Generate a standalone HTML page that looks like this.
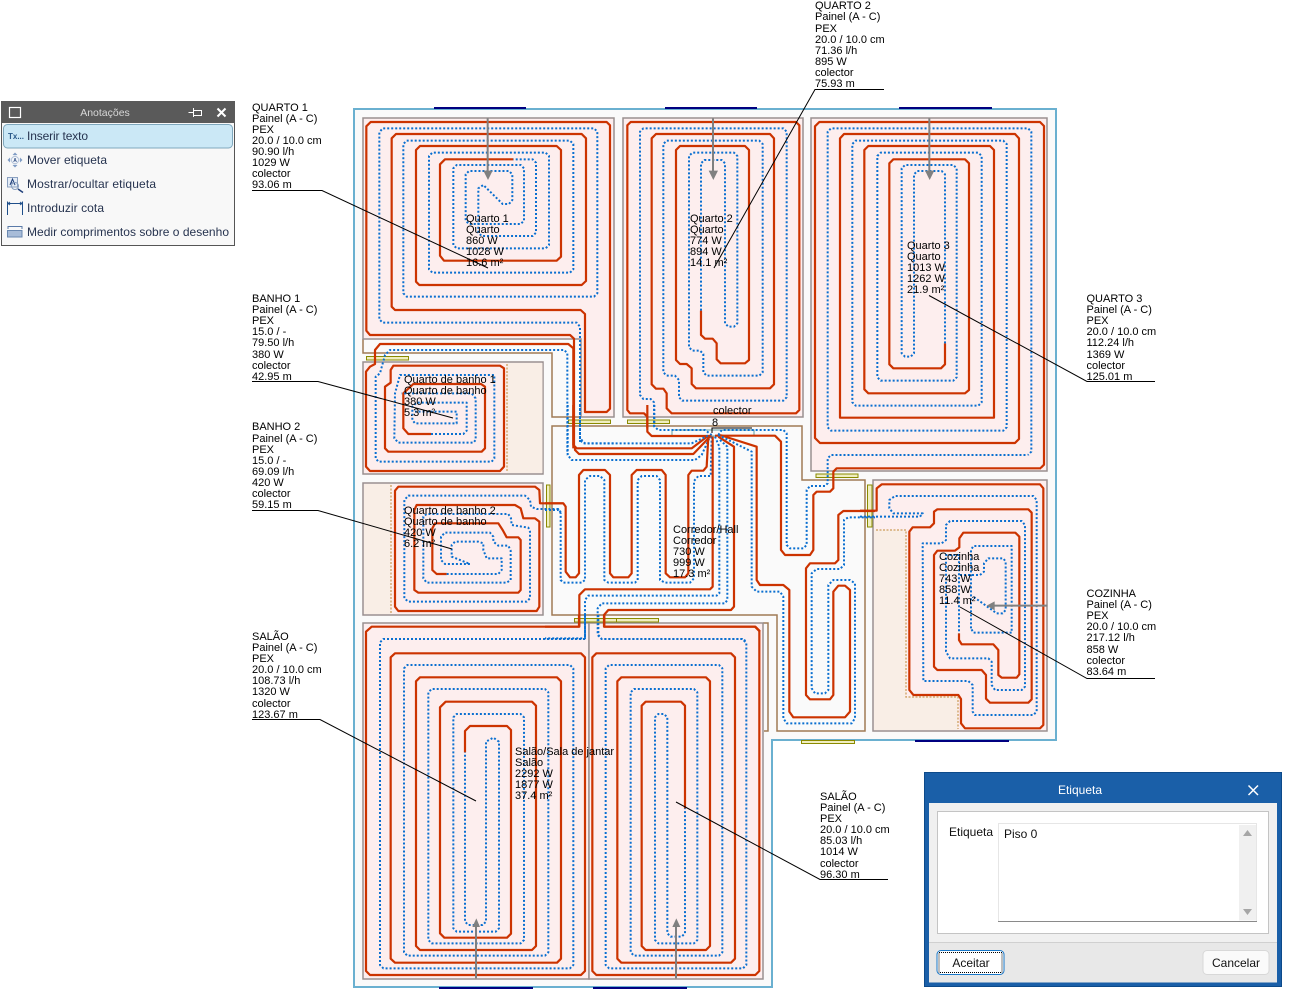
<!DOCTYPE html>
<html lang="pt">
<head>
<meta charset="utf-8">
<title>Anotações</title>
<style>
html,body{margin:0;padding:0;background:#fff;width:1300px;height:1007px;overflow:hidden}
svg{display:block}
text{font-family:"Liberation Sans",sans-serif;font-size:11px;fill:#000}
.r,.b,.g{fill:none;vector-effect:non-scaling-stroke;stroke-linejoin:round}
.r{stroke:#cc3300;stroke-width:2.2}
.b{stroke:#0a6fd0;stroke-width:2;stroke-dasharray:2 2}
.g{stroke:#808080;stroke-width:2}
.room{fill:#fdeeee;stroke:#999090;stroke-width:1.5}
.wall{fill:none;stroke:#a07a55;stroke-width:1.5}
.door{fill:#f0eec0;stroke:#8a8a00;stroke-width:1}
.lead{fill:none;stroke:#000;stroke-width:1}
.tan{fill:none;stroke:#d4aa70;stroke-width:1.5;stroke-dasharray:2 1.5}
.p{font-size:12px;fill:#26334f}
.d{font-size:12px;fill:#111}
</style>
</head>
<body>
<svg width="1300" height="1007" viewBox="0 0 1300 1007" xmlns="http://www.w3.org/2000/svg">
<!-- outer outline -->
<path d="M354 109H1056V740H772V987H354Z" fill="#fafafa" stroke="#6ab0d0" stroke-width="2"/>
<g stroke="#000080" stroke-width="2">
<path d="M434 108H526M665 108H757M899 108H992M439 988H533M593 988H687M915 741H1009"/>
</g>
<!-- walls -->
<path class="wall" d="M363 339V353H552V417H581"/>
<path class="wall" d="M552 426H802V480H865V731H777V615H552Z"/>
<path class="wall" d="M763 623H768V731H764"/>
<!-- rooms -->
<path class="room" d="M363 118H614V417H581V339H363Z"/>
<rect class="room" x="623" y="118" width="180" height="299"/>
<rect class="room" x="811" y="118" width="236" height="353"/>
<rect class="room" x="363" y="362" width="180" height="112"/>
<rect x="507" y="363" width="35.500" height="110" fill="#f9eee6"/>
<path class="tan" d="M507 364V472"/>
<rect class="room" x="363" y="483" width="180" height="132"/>
<rect x="364" y="484" width="27" height="130" fill="#f9eee6"/>
<path class="tan" d="M391 485V613"/>
<rect class="room" x="873" y="480" width="174" height="251"/>
<path d="M874 530H906V697H958V730H874Z" fill="#f9eee6"/>
<path class="tan" d="M876 530H906V697H958V729"/>
<rect class="room" x="363" y="623" width="226" height="356"/>
<rect class="room" x="589" y="623" width="174" height="356"/>
<!-- doors -->
<g class="door">
<rect class="door" x="366.500" y="356.500" width="42" height="3.500"/>
<rect class="door" x="568.500" y="420" width="42" height="3.500"/>
<rect class="door" x="627.500" y="420" width="42" height="3.500"/>
<rect class="door" x="816" y="474" width="42" height="3.500"/>
<rect class="door" x="546.500" y="485" width="3.500" height="42"/>
<rect class="door" x="867.500" y="485" width="4.500" height="42"/>
<rect class="door" x="574.500" y="618.500" width="42" height="3.500"/>
<rect class="door" x="616.500" y="618.500" width="42" height="3.500"/>
<rect class="door" x="801.500" y="740.500" width="53" height="3"/>
</g>
<!-- collector -->
<rect x="672" y="430" width="82" height="6" fill="none" stroke="#5f9ea0" stroke-width="1"/>
<path d="M712 433V428H752" fill="none" stroke="#000" stroke-width="1"/>

<!-- Quarto 1 -->
<g transform="translate(350,100) scale(.33333)">
<path class="r" d="M490 178H285L270 193V467L282 482H620L633 470V150L620 138H210L198 150V545L208 555H695L708 543V115L695 102H138L125 115V620L135 630H692L705 642V936H770L780 926V76L770 66H62L49 79V692L60 705H660L672 716V1044"/>
<path class="b" d="M690 1026V680L680 668H98L88 658V97L98 85H732L742 95V580L732 590H170L160 580V132L170 122H660L670 132V508L660 518H247L237 508V168L247 158H587L597 168V435L587 445H320L310 435V205L320 195H512L522 205V362L512 372H357L347 362V223L357 213H477L487 223V300L477 312H458L400 255L385 265V398L395 408H548L558 398V188L548 178H490"/>
<path class="g" d="M413 55V215"/><path d="M400 212H428L414 240Z" fill="#808080"/>
</g>

<!-- Quarto 2 & 3 -->
<g transform="translate(610,100) scale(.33333)">
<path class="r" d="M112 985V950L102 940H60L52 930V76L62 66H558L568 76V930L558 940H185L170 925V880L160 866H138L125 853V115L138 102H480L492 115V853L480 865H258L245 852V805L230 792H210L198 780V150L210 138H405L417 150V780L405 790H332L320 778V730L308 716H285L273 705V632"/>
<path class="b" d="M273 632V190L283 180H335L345 190V670L355 680H372L382 670V168L372 158H247L237 168V742L247 752H270L280 762V817L290 827H448L458 817V132L448 122H170L160 132V817L170 827H195L207 840V892L217 902H520L530 892V95L520 85H100L90 95V885L100 897H122L132 907V985"/>
<path class="r" d="M1005 730V793L993 805H850L838 793V190L850 178H1065L1077 190V870L1065 880H775L763 868V150L775 138H1140L1152 150V953H690V115L702 102H1215L1227 115V1017L1215 1029H630L615 1014V79L628 66H1290L1302 78V1094L1292 1104"/>
<path class="b" d="M1005 730V223L995 213H922L912 223V760L902 770H885L875 760V205L885 195H1030L1040 205V832L1030 842H812L802 832V168L812 158H1105L1115 168V907L1105 917H737L727 907V132L737 122H1180L1190 132V982L1180 992H663L653 982V95L663 85H1254L1264 95V1055L1254 1065"/>
<path class="g" d="M309 55V215"/><path d="M296 212H324L310 240Z" fill="#808080"/>
<path class="g" d="M958 55V215"/><path d="M945 212H973L959 240Z" fill="#808080"/>
</g>

<!-- Corridor -->
<g transform="translate(545,405) scale(.33333)">
<path class="r" d="M85 0V120L95 130H440L490 92"/>
<path class="r" d="M90 125V135L102 147H445L495 95"/>
<path class="r" d="M307 0V80L320 93H500"/>
<path class="b" d="M105 0V105L115 115H440L490 92"/>
<path class="b" d="M68 0V150L80 165H450L470 150L495 95"/>
<path class="b" d="M328 0V65L340 75H480L500 90"/>
<!-- loop to Quarto 3 -->
<path class="r" d="M510 92H690L708 110V435L720 450H795L805 435V270L815 260H855L865 250V200L875 190H1488"/>
<path class="b" d="M520 90L530 75H715L725 85V420L735 430H775L785 420V255L795 243H840L848 235V160L858 150H1448"/>
<!-- serpent -->
<path class="r" d="M0 295H55L62 305V500L75 517H92L102 505V210L115 195H180L195 210V505L205 517H250L260 505V210L275 195H350L362 210V505L375 517H420L430 505V210L440 197H475L485 185L490 95"/>
<path class="b" d="M0 315H40L47 325V525L55 533H110L120 525V225L135 213H165L178 225V525L190 533H270L278 525V225L290 213H335L345 225V525L360 533H435L447 520V228L460 213H497L500 95"/>
<!-- to Salão -->
<path class="r" d="M503 95V545L495 553H120L103 570V665H0"/>
<path class="r" d="M520 95L567 125V605L558 615H190L177 630V665H630L645 680"/>
<path class="b" d="M510 95L523 125V565L515 572H130L120 585V700H0"/>
<path class="b" d="M525 105L547 125V585L540 595H170L158 610V690L170 702H595L605 712"/>
<!-- to Cozinha -->
<path class="r" d="M525 90L635 125V525L645 540H715L733 555V920L745 937H900L915 920V555L900 542H880L865 560V870L855 883H795L783 870V490L795 475H870L880 465V330L895 318H990"/>
<path class="b" d="M520 90L620 140V545L635 560H705L715 575V940L725 955H920L930 940V535L915 525H865L850 540V855L840 865H810L800 850V505L815 492H885L897 480V345L910 337H990"/>
</g>

<!-- Quarto de banho 1 -->
<g transform="translate(355,340) scale(.33333)">
<path class="r" d="M655 325V25L640 12H75L60 30V72L45 80L33 95V380L45 393H435L447 380V85L435 77H115L107 90V128L90 140V325L100 335H380L390 325V140L378 132H175L145 160V265L160 282H228"/>
<path class="b" d="M228 282H325L335 272V188H185L172 200V240L180 250H305V215H180"/>
<path class="b" d="M637 335V40L628 30H105L90 45L75 100L62 110V355L70 365H410L418 355V105H135L120 160L118 295L130 308H355L362 300V175L350 160H140"/>
<path class="b" d="M675 0V295L690 310H780"/>
</g>

<!-- Quarto de banho 2 -->
<g transform="translate(355,340) scale(.33333)">
<path class="r" d="M625 490H555L553 450L540 440H130L120 452V800L130 813H545L553 800V545L540 535H505L497 505L480 495H185L178 510V750L190 758H490L497 750V600L490 592H455L443 570L430 550H240L232 565V690L245 702H275"/>
<path class="b" d="M275 702H430L440 690V655H395L385 630V610L370 605H300L290 615V650L345 672H270L258 660V590L270 578H405L415 590V605L430 617H460L467 632V720L455 728H215L205 715V530L215 522H460L468 535L470 555L520 563L525 575V775L515 785H160L148 775V480L160 467H510L525 480L528 500L545 507H610L618 518"/>
</g>

<!-- Cozinha -->
<g transform="translate(860,460) scale(.33333)">
<path class="r" d="M0 152H50V85L65 73H540L550 85V795L540 805H315L303 790V717L295 705H160L148 690V215L158 202H210L222 190V155L232 148H505L515 158V718L505 728H390L378 716V645L365 630H232L222 620V285L232 272H285L298 262V235L310 218H466L478 230V643L470 653H425L415 645V570L400 553H305L297 540V520"/>
<path class="b" d="M0 170H180L188 160H100L88 145V120L105 108H520L530 120V755L520 765H345L338 755V675L325 663H190L188 250H245L258 240V195L270 183H485L495 195V680L485 690H405L395 675V605L385 595H270L258 575V285H297V520"/>
<path class="b" d="M333 505V270L340 258H455V518H340L333 505"/>
<path class="b" d="M300 345H360L372 335V310L385 295H430L437 305V450L428 460H410L340 410"/>
<path class="g" d="M562 437H402"/><path d="M380 437L404 424V451Z" fill="#808080"/>
</g>

<!-- Salão -->
<g transform="translate(355,615) scale(.33333)">
<path class="r" d="M672 0V35H50L33 50V1068L45 1080H678L690 1068V127L678 115H120L107 127V1031L120 1043H606L618 1031V199L606 187H195L183 199V993L195 1005H531L543 993V272L531 260H272L255 277V955L268 968H456L468 956V345L456 333H345L330 348V412"/>
<path class="b" d="M690 0V72H85L75 82V1050L85 1060H645L655 1050V160L645 150H157L147 160V1012L157 1022H570L580 1012V232L570 222H230L220 232V975L230 985H497L507 975V307L497 297H305L295 307V940L305 950H422L432 940V380L415 368L393 380V920L383 930H340L330 920V412"/>
<path class="r" d="M748 0V35H1201L1213 47V1068L1201 1080H724L712 1068V127L724 115H1128L1140 127V1031L1128 1043H799L787 1031V199L799 187H1053L1065 199V993L1053 1005H872L860 993V272L872 260H978L990 272V580"/>
<path class="b" d="M730 0V60L740 72H1162L1174 84V1050L1164 1060H762L752 1050V160L762 150H1092L1102 160V1012L1092 1022H837L827 1012V232L837 222H1017L1027 232V975L1017 985H910L900 975V307L910 297H927L937 307V955L947 965H980L990 955V580"/>
<path class="g" d="M363 1090V935"/><path d="M352 936H375L364 910Z" fill="#808080"/>
<path class="g" d="M963 1090V935"/><path d="M952 936H976L964 910Z" fill="#808080"/>
</g>

<!-- room labels -->
<text x="466" y="222">Quarto 1<tspan x="466" dy="11">Quarto</tspan><tspan x="466" dy="11">860 W</tspan><tspan x="466" dy="11">1028 W</tspan><tspan x="466" dy="11">16.6 m²</tspan></text>
<text x="690" y="222">Quarto 2<tspan x="690" dy="11">Quarto</tspan><tspan x="690" dy="11">774 W</tspan><tspan x="690" dy="11">894 W</tspan><tspan x="690" dy="11">14.1 m²</tspan></text>
<text x="907" y="249">Quarto 3<tspan x="907" dy="11">Quarto</tspan><tspan x="907" dy="11">1013 W</tspan><tspan x="907" dy="11">1262 W</tspan><tspan x="907" dy="11">21.9 m²</tspan></text>
<text x="404" y="383">Quarto de banho 1<tspan x="404" dy="11">Quarto de banho</tspan><tspan x="404" dy="11">380 W</tspan><tspan x="404" dy="11">5.3 m²</tspan></text>
<text x="404" y="514">Quarto de banho 2<tspan x="404" dy="11">Quarto de banho</tspan><tspan x="404" dy="11">420 W</tspan><tspan x="404" dy="11">6.2 m²</tspan></text>
<text x="673" y="533">Corredor/Hall<tspan x="673" dy="11">Corredor</tspan><tspan x="673" dy="11">730 W</tspan><tspan x="673" dy="11">999 W</tspan><tspan x="673" dy="11">17.3 m²</tspan></text>
<text x="939" y="560">Cozinha<tspan x="939" dy="11">Cozinha</tspan><tspan x="939" dy="11">743 W</tspan><tspan x="939" dy="11">858 W</tspan><tspan x="939" dy="11">11.4 m²</tspan></text>
<text x="515" y="755">Salão/Sala de jantar<tspan x="515" dy="11">Salão</tspan><tspan x="515" dy="11">2292 W</tspan><tspan x="515" dy="11">1877 W</tspan><tspan x="515" dy="11">37.4 m²</tspan></text>
<text x="713" y="414">colector</text>
<text x="712" y="426">8</text>

<!-- leaders -->
<g class="lead">
<path class="lead" d="M252 190.500H322L488 268"/>
<path class="lead" d="M884 89.500H815L714 268"/>
<path class="lead" d="M1155 381.500H1087L929 295.500"/>
<path class="lead" d="M252 381.500H318L453 418"/>
<path class="lead" d="M252 510.500H318L452 549"/>
<path class="lead" d="M252 719.500H320L476 801"/>
<path class="lead" d="M888 879.500H820L676 802"/>
<path class="lead" d="M1155 678.500H1087L960 607"/>
</g>

<!-- callouts -->
<text x="252" y="111">QUARTO 1<tspan x="252" dy="11">Painel (A - C)</tspan><tspan x="252" dy="11">PEX</tspan><tspan x="252" dy="11">20.0 / 10.0 cm</tspan><tspan x="252" dy="11">90.90 l/h</tspan><tspan x="252" dy="11">1029 W</tspan><tspan x="252" dy="11">colector</tspan><tspan x="252" dy="11">93.06 m</tspan></text>
<text x="815" y="9">QUARTO 2<tspan x="815" dy="11">Painel (A - C)</tspan><tspan x="815" dy="12">PEX</tspan><tspan x="815" dy="11">20.0 / 10.0 cm</tspan><tspan x="815" dy="11">71.36 l/h</tspan><tspan x="815" dy="11">895 W</tspan><tspan x="815" dy="11">colector</tspan><tspan x="815" dy="11">75.93 m</tspan></text>
<text x="1086.500" y="302">QUARTO 3<tspan x="1086.500" dy="11">Painel (A - C)</tspan><tspan x="1086.500" dy="11">PEX</tspan><tspan x="1086.500" dy="11">20.0 / 10.0 cm</tspan><tspan x="1086.500" dy="11">112.24 l/h</tspan><tspan x="1086.500" dy="12">1369 W</tspan><tspan x="1086.500" dy="11">colector</tspan><tspan x="1086.500" dy="11">125.01 m</tspan></text>
<text x="252" y="302">BANHO 1<tspan x="252" dy="11">Painel (A - C)</tspan><tspan x="252" dy="11">PEX</tspan><tspan x="252" dy="11">15.0 / -</tspan><tspan x="252" dy="11">79.50 l/h</tspan><tspan x="252" dy="12">380 W</tspan><tspan x="252" dy="11">colector</tspan><tspan x="252" dy="11">42.95 m</tspan></text>
<text x="252" y="430">BANHO 2<tspan x="252" dy="12">Painel (A - C)</tspan><tspan x="252" dy="11">PEX</tspan><tspan x="252" dy="11">15.0 / -</tspan><tspan x="252" dy="11">69.09 l/h</tspan><tspan x="252" dy="11">420 W</tspan><tspan x="252" dy="11">colector</tspan><tspan x="252" dy="11">59.15 m</tspan></text>
<text x="252" y="640">SALÃO<tspan x="252" dy="11">Painel (A - C)</tspan><tspan x="252" dy="11">PEX</tspan><tspan x="252" dy="11">20.0 / 10.0 cm</tspan><tspan x="252" dy="11">108.73 l/h</tspan><tspan x="252" dy="11">1320 W</tspan><tspan x="252" dy="12">colector</tspan><tspan x="252" dy="11">123.67 m</tspan></text>
<text x="820" y="800">SALÃO<tspan x="820" dy="11">Painel (A - C)</tspan><tspan x="820" dy="11">PEX</tspan><tspan x="820" dy="11">20.0 / 10.0 cm</tspan><tspan x="820" dy="11">85.03 l/h</tspan><tspan x="820" dy="11">1014 W</tspan><tspan x="820" dy="12">colector</tspan><tspan x="820" dy="11">96.30 m</tspan></text>
<text x="1086.500" y="597">COZINHA<tspan x="1086.500" dy="11">Painel (A - C)</tspan><tspan x="1086.500" dy="11">PEX</tspan><tspan x="1086.500" dy="11">20.0 / 10.0 cm</tspan><tspan x="1086.500" dy="11">217.12 l/h</tspan><tspan x="1086.500" dy="12">858 W</tspan><tspan x="1086.500" dy="11">colector</tspan><tspan x="1086.500" dy="11">83.64 m</tspan></text>

<!-- Anotações panel -->
<rect x="1.500" y="101.500" width="233" height="144" fill="#f8f8f8" stroke="#555" stroke-width="1"/>
<rect x="1" y="101" width="234" height="22" fill="#5a5a5a"/>
<rect x="9.500" y="107.500" width="11" height="10" fill="none" stroke="#fff" stroke-width="1.200"/>
<text x="105" y="116" text-anchor="middle" style="font-size:10.500px;fill:#d8d8d8">Anotações</text>
<path d="M188.500 112.500H193.500M193.500 108V117M193.500 110.500H201.500V115.500H193.500" fill="none" stroke="#fff" stroke-width="1"/>
<path d="M217.500 108.500L225.500 116.500M225.500 108.500L217.500 116.500" stroke="#fff" stroke-width="2"/>
<rect x="3.500" y="124.500" width="229" height="23.500" rx="4" fill="#cbe8f6" stroke="#7fa8bd" stroke-width="1"/>
<text x="8" y="139" style="font-size:8px;font-weight:bold;fill:#2b5a8a">Tx...</text>
<text class="p" x="27" y="140" textLength="61">Inserir texto</text>
<g>
<path d="M15 154L21 160L15 166L9 160Z" fill="#dde5f0"/>
<circle cx="15" cy="160" r="3.500" fill="#f4f7fb" stroke="#a8b8d0" stroke-width=".7"/>
<path d="M15 152.500L12.500 155H17.500ZM15 167.500L12.500 165H17.500ZM7.500 160L10 157.500V162.500ZM22.500 160L20 157.500V162.500Z" fill="#7f9cc4"/>
<text x="15" y="162" text-anchor="middle" style="font-size:5px;font-weight:bold;fill:#2b4a80">A</text>
</g>
<text class="p" x="27" y="164" textLength="80">Mover etiqueta</text>
<g>
<rect x="7.500" y="177.500" width="10" height="9.500" fill="#e4ecf6" stroke="#8aa0c0" stroke-width="1"/>
<path d="M10 185L12.500 179L15 185M11 183H14" fill="none" stroke="#1f3f7a" stroke-width="1"/>
<circle cx="15" cy="186" r="3.500" fill="none" stroke="#8aa0c0" stroke-width="1"/>
<path d="M18 189L23 192.500" stroke="#1f3f7a" stroke-width="1.500"/>
</g>
<text class="p" x="27" y="188" textLength="129">Mostrar/ocultar etiqueta</text>
<path d="M7.500 201.500V215M22.500 201.500V215M8 203.500H22M10 202L8 203.500L10 205M20 202L22 203.500L20 205" fill="none" stroke="#1f4f8a" stroke-width="1"/>
<text class="p" x="27" y="212" textLength="77">Introduzir cota</text>
<path d="M8 226.500H22M8 226V229M22 226V229" fill="none" stroke="#5a7aa8" stroke-width="1"/>
<rect x="7.500" y="230.500" width="14.500" height="6.500" fill="#a8bcd8" stroke="#6a88b0" stroke-width="1"/>
<text class="p" x="27" y="236" textLength="202">Medir comprimentos sobre o desenho</text>

<!-- Etiqueta dialog -->
<rect x="924.500" y="772.500" width="357" height="214" fill="#1a5fa8" stroke="#0d4a8a" stroke-width="1"/>
<text x="1080" y="794" text-anchor="middle" style="font-size:12px;fill:#fff">Etiqueta</text>
<path d="M1248.500 785.500L1258 795M1258 785.500L1248.500 795" stroke="#fff" stroke-width="1.500"/>
<rect x="929" y="803" width="348" height="179.500" fill="#f0f0f0"/>
<rect x="937.500" y="811.500" width="331" height="122" fill="#fff" stroke="#c4c4c4" stroke-width="1"/>
<text class="d" x="949" y="836">Etiqueta</text>
<rect x="998.500" y="823.500" width="258" height="98" fill="#fff" stroke="#e6e6e6" stroke-width="1"/>
<path d="M998 921.500H1257" stroke="#8a8a8a" stroke-width="1"/>
<rect x="1239" y="825" width="17" height="95.500" fill="#f0f0f0"/>
<path d="M1243 836L1247.500 830L1252 836Z" fill="#a6a6a6"/>
<path d="M1243 909L1247.500 915L1252 909Z" fill="#a6a6a6"/>
<text class="d" x="1004" y="838">Piso 0</text>
<rect x="929" y="942" width="348" height="40.500" fill="#e8e8e8"/>
<path d="M929 942.500H1277" stroke="#d0d0d0" stroke-width="1"/>
<rect x="937" y="950.500" width="67" height="24" rx="4" fill="#fff" stroke="#1a78c8" stroke-width="1"/>
<rect x="939" y="952.500" width="63" height="20" fill="none" stroke="#000" stroke-width="1" stroke-dasharray="1 1"/>
<text class="d" x="971" y="967" text-anchor="middle">Aceitar</text>
<rect x="1203" y="950.500" width="66" height="24" rx="4" fill="#fafafa" stroke="#d8d8d8" stroke-width="1"/>
<text class="d" x="1236" y="967" text-anchor="middle">Cancelar</text>
</svg>
</body>
</html>
